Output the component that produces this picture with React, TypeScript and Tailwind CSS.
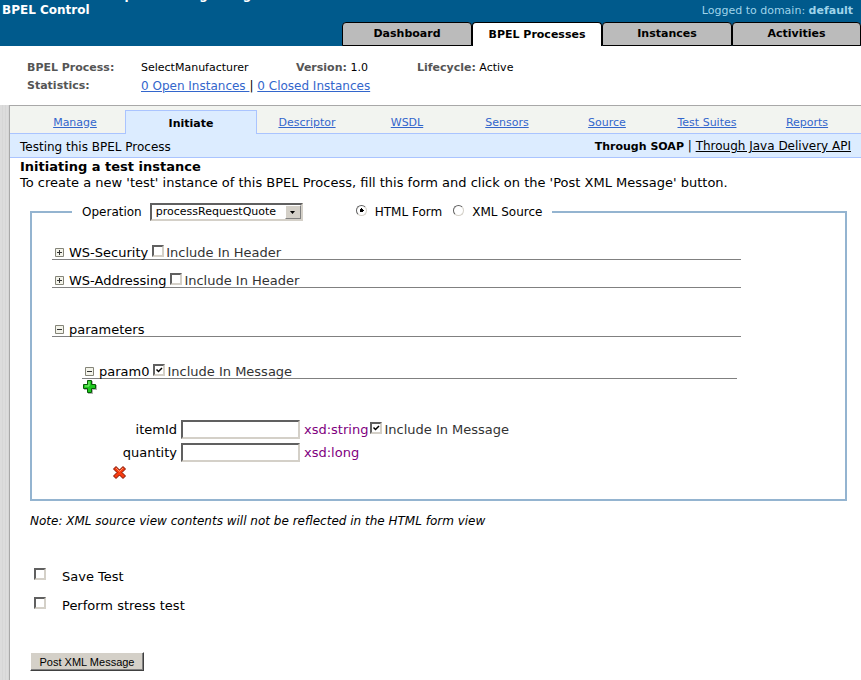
import { useState, useId } from 'react';

const MAIN_TABS = ['Dashboard', 'BPEL Processes', 'Instances', 'Activities'];

const SUB_TABS = [
  { label: 'Manage', width: 'w-[100px]' },
  { label: 'Initiate', width: 'w-[132px]' },
  { label: 'Descriptor', width: 'w-[100px]' },
  { label: 'WSDL', width: 'w-[100px]' },
  { label: 'Sensors', width: 'w-[100px]' },
  { label: 'Source', width: 'w-[100px]' },
  { label: 'Test Suites', width: 'w-[100px]' },
  { label: 'Reports', width: 'w-[100px]' },
];

const insetCls =
  'border-2 border-t-[#606060] border-l-[#606060] border-b-[#d4d0c8] border-r-[#d4d0c8] bg-white outline-none';

export default function App() {
  const [view, setView] = useState('html');

  return (
    <div className="min-h-screen bg-white font-['DejaVu_Sans','Verdana',sans-serif] text-xs text-black flex flex-col">
      <Header />
      <ProcessSummary />
      <div className="flex grow">
        <div className="w-[9px] shrink-0 bg-[repeating-linear-gradient(90deg,#dcdcdc_0_2px,#d6d6d6_2px_3px)]" />
        <main className="grow min-w-0 border-l border-t border-[#a8a8a8] pb-2">
          <SubTabs />
          <div className="flex items-center justify-between h-6 border-b border-[#aac4ff] bg-[#dcecff] px-2.5 pt-0.5">
            <span>Testing this BPEL Process</span>
            <span>
              <b className="text-[11px]">Through SOAP</b> | <a href="#java" className="underline">Through Java Delivery API</a>
            </span>
          </div>

          <h1 className="pl-2.5 text-[13px] leading-4 font-bold pt-px">Initiating a test instance</h1>
          <p className="pl-2.5 text-[13px] leading-4">
            To create a new 'test' instance of this BPEL Process, fill this form and click on the 'Post XML Message' button.
          </p>

          <form className="pl-5 pr-3.5 pt-[11px]" onSubmit={(e) => e.preventDefault()}>
            <fieldset className="border-2 border-[#94b4d0] pl-5 pr-[104px] pb-[19px]">
              <legend className="ml-5 px-2.5 flex items-center h-5">
                <label htmlFor="operation" className="mr-2">Operation</label>
                <span className="relative inline-flex">
                  <select id="operation" className={`${insetCls} appearance-none w-[153px] h-[18px] pl-1 text-[11px]`}>
                    <option>processRequestQuote</option>
                  </select>
                  <span className="pointer-events-none absolute right-0.5 top-0.5 flex h-3.5 w-4 items-center justify-center border border-[#808080] border-t-white border-l-white bg-[#d4d0c8]">
                    <svg width="5" height="3" viewBox="0 0 5 3"><path d="M0 0h5L2.5 3z" /></svg>
                  </span>
                </span>
                <Radio label="HTML Form" checked={view === 'html'} onSelect={() => setView('html')} className="ml-[53px]" />
                <Radio label="XML Source" checked={view === 'xml'} onSelect={() => setView('xml')} className="ml-[11px]" />
              </legend>

              <TreeRow label="WS-Security" check="Include In Header" className="mt-[18px]" />
              <TreeRow label="WS-Addressing" check="Include In Header" className="mt-2" />
              <TreeRow label="parameters" open className="mt-[29px]" />
              <div className="pl-[30px] pr-1">
                <TreeRow label="param0" check="Include In Message" open checked className="mt-[22px]" />
                <button type="button" aria-label="Add parameter" className="block">
                  <PlusIcon />
                </button>
                <div className="mt-[26px] flex flex-col gap-1">
                  <ParamField label="itemId" type="xsd:string" optional />
                  <ParamField label="quantity" type="xsd:long" />
                </div>
                <button type="button" aria-label="Remove parameter" className="ml-[30px] mt-[3px] block">
                  <CrossIcon />
                </button>
              </div>
            </fieldset>

            <p className="mt-3 italic leading-4">
              Note: XML source view contents will not be reflected in the HTML form view
            </p>

            <div className="mt-[39px] ml-1 flex flex-col gap-3">
              <Option label="Save Test" />
              <Option label="Perform stress test" />
            </div>

            <button
              type="submit"
              className="mt-[38px] h-[19px] w-[114px] border border-t-white border-l-white border-b-[#404040] border-r-[#404040] bg-[#d4d0c8] font-['Liberation_Sans',sans-serif] text-[11px] leading-4 shadow-[inset_-1px_-1px_#808080]"
            >
              Post XML Message
            </button>
          </form>
        </main>
      </div>
    </div>
  );
}

function Header() {
  return (
    <header className="flex h-[46px] items-start justify-between overflow-hidden bg-[#005a8c] text-white">
      <div className="-mt-3 pl-0.5 text-xs font-bold leading-[15px] whitespace-nowrap">
        <div className="pl-[86px]">Enterprise Manager 10g</div>
        <div>BPEL Control</div>
      </div>
      <div className="flex flex-col">
        <div className="h-[22px] pt-[3px] pr-2 text-right text-[11px] leading-4 text-[#9fd4ea]">
          Logged to domain: <b>default</b>
        </div>
        <nav className="flex">
          {MAIN_TABS.map((tab) => (
            <MainTab key={tab} label={tab} active={tab === 'BPEL Processes'} />
          ))}
        </nav>
      </div>
    </header>
  );
}

function MainTab({ label, active }: { label: string; active: boolean }) {
  return (
    <a
      href="#tab"
      className={`flex h-6 w-[130px] items-center justify-center rounded-t border-t border-l border-r border-black pt-px text-[11px] font-bold text-black last:w-[129px] ${
        active ? 'bg-white' : 'border-b bg-[#bbb]'
      }`}
    >
      {label}
    </a>
  );
}

function ProcessSummary() {
  return (
    <section className="grid h-[59px] grid-cols-[114px_155px_121px_auto] content-start justify-start gap-y-0.5 pl-[27px] pt-3.5 text-[11px] leading-4">
      <b className="text-[#555]">BPEL Process:</b>
      <span>SelectManufacturer</span>
      <span><b className="text-[#555]">Version:</b> 1.0</span>
      <span><b className="text-[#555]">Lifecycle:</b> Active</span>
      <b className="text-[#555]">Statistics:</b>
      <span className="col-span-3 text-xs leading-4">
        <a href="#open" className="text-[#3366cc] underline">0 Open Instances </a>|{' '}
        <a href="#closed" className="text-[#3366cc] underline">0 Closed Instances</a>
      </span>
    </section>
  );
}

function SubTabs() {
  return (
    <nav className="flex h-7 items-stretch bg-[#f2f4f0] text-[11px]">
      <span className="w-[15px] border-b border-[#aac4ff]" />
      {SUB_TABS.map(({ label, width }) =>
        label === 'Initiate' ? (
          <b key={label} className={`${width} mt-1 flex items-center justify-center border border-b-0 border-[#aac4ff] bg-[#dcecff] pt-[3px]`}>
            {label}
          </b>
        ) : (
          <span key={label} className={`${width} flex items-center justify-center border-b border-[#aac4ff] pt-[7px]`}>
            <a href="#sub" className="text-[#3366cc] underline">{label}</a>
          </span>
        ),
      )}
      <span className="grow border-b border-[#aac4ff]" />
    </nav>
  );
}

function Radio({ label, checked, onSelect, className }: { label: string; checked: boolean; onSelect: () => void; className: string }) {
  return (
    <label className={`${className} flex items-center`}>
      <input
        type="radio"
        name="view"
        checked={checked}
        onChange={onSelect}
        className="mb-1 mr-2 h-[11px] w-[11px] appearance-none rounded-full border border-t-[#606060] border-l-[#606060] border-b-[#d4d0c8] border-r-[#d4d0c8] checked:bg-[radial-gradient(circle,#000_2px,#fff_2px)]"
      />
      {label}
    </label>
  );
}

function Checkbox({ id, checked = false }: { id: string; checked?: boolean }) {
  const [on, setOn] = useState(checked);
  return (
    <span className="relative mb-0.5 inline-flex">
      <input
        id={id}
        type="checkbox"
        checked={on}
        onChange={(e) => setOn(e.target.checked)}
        className={`${insetCls} h-3 w-3 appearance-none`}
      />
      {on && (
        <svg className="pointer-events-none absolute left-0.5 top-0.5" width="8" height="8" viewBox="0 0 8 8" fill="none">
          <path d="M1.5 3.5L3.5 5.5L7 2" stroke="#000" strokeWidth="1.5" />
        </svg>
      )}
    </span>
  );
}

function TreeRow({ label, check, open, checked, className }: { label: string; check?: string; open?: boolean; checked?: boolean; className: string }) {
  const id = useId();
  return (
    <div className={`${className} flex h-5 items-end border-b border-[#808080] pl-[3px] text-[13px] leading-3`}>
      <button type="button" aria-label={`Toggle ${label}`} className="mb-0.5 mr-[5px]">
        <svg className="block" width="9" height="9" viewBox="0 0 9 9" fill="none" stroke="#848478">
          <path d="M.5.5h8v8h-8z" fill="#f3f3ea" />
          <path d={open ? 'M2 4.5h5' : 'M2 4.5h5M4.5 2v5'} stroke="#333" />
        </svg>
      </button>
      <span>{label}</span>
      {check && (
        <label htmlFor={id} className="ml-1 flex items-end gap-0.5 text-[#333]">
          <Checkbox id={id} checked={checked} />
          {check}
        </label>
      )}
    </div>
  );
}

function ParamField({ label, type, optional }: { label: string; type: string; optional?: boolean }) {
  const id = useId();
  return (
    <div className="flex h-[19px] items-center text-[13px]">
      <label htmlFor={id} className="mr-1 w-[95px] text-right">{label}</label>
      <input id={id} className={`${insetCls} h-[19px] w-[119px] px-1`} />
      <span className="ml-1 text-[#800080]">{type}</span>
      {optional && <IncludeBox label="Include In Message" />}
    </div>
  );
}

function IncludeBox({ label }: { label: string }) {
  const id = useId();
  return (
    <label htmlFor={id} className="ml-0.5 flex items-center gap-0.5 text-[#333]">
      <Checkbox id={id} checked />
      {label}
    </label>
  );
}

function Option({ label }: { label: string }) {
  const id = useId();
  return (
    <label htmlFor={id} className="flex h-[17px] items-end gap-4 text-[13px] leading-4">
      <span className="flex self-start">
        <Checkbox id={id} />
      </span>
      {label}
    </label>
  );
}

function PlusIcon() {
  return (
    <svg className="block" width="15" height="15" viewBox="0 0 15 15">
      <path d="M6 2h5v4h4v5h-4v4H6v-4H2V6h4z" fill="#b4b4b4" />
      <path d="M5.5 1.5h4v4h4v4h-4v4h-4v-4h-4v-4h4z" fill="#1ec81e" stroke="#065c06" />
      <path d="M7 2.5V7H3" fill="none" stroke="#8cf27c" />
    </svg>
  );
}

function CrossIcon() {
  return (
    <svg className="block" width="15" height="15" viewBox="0 0 15 15">
      <path d="M4 1.5L7.5 5L11 1.5L13.5 4L10 7.5L13.5 11L11 13.5L7.5 10L4 13.5L1.5 11L5 7.5L1.5 4z" fill="#f83c10" stroke="#7c1000" />
      <path d="M4 3L7.5 6.5L11 3" fill="none" stroke="#ff9468" />
    </svg>
  );
}
